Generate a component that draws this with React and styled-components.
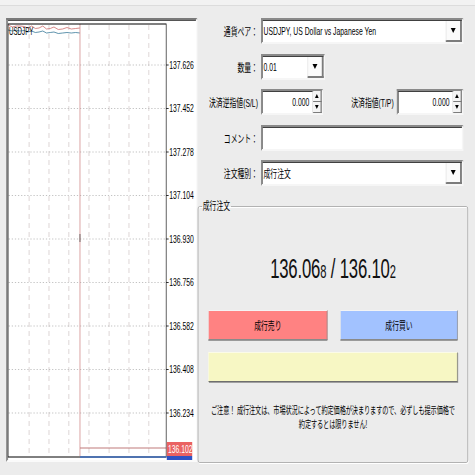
import React from 'react';
import styled, { createGlobalStyle } from 'styled-components';

const Global = createGlobalStyle`
  html, body { margin: 0; padding: 0; background: #ececec; overflow: hidden; }
  body { font-family: "Liberation Sans", "Noto Sans CJK JP", sans-serif; color: #000; }
`;

const Stage = styled.div`
  width: 766px;
  height: 475px;
  transform: scaleX(0.62);
  transform-origin: 0 0;
  background: #ececec;
  display: flex;
  flex-direction: column;
`;

const TopStrip = styled.div`
  height: 5px;
  background: #f2f2f2;
  border-bottom: 1px solid #dcdcdc;
`;

const Body = styled.div`
  display: flex;
  padding: 12px 0 0 10px;
  gap: 1px;
`;

const ChartPanel = styled.div`
  box-sizing: border-box;
  width: 308px;
  height: 444px;
  background: #fff;
  border: 2px solid;
  border-color: #7a7a7a #fafafa #fafafa #7a7a7a;
  box-shadow: inset 1px 1px 0 #555;
`;

const RightPane = styled.div`
  width: 436px;
  display: flex;
  flex-direction: column;
`;

const Form = styled.div`
  display: flex;
  flex-direction: column;
  gap: 9.5px;
`;

const Row = styled.div`
  display: flex;
  align-items: center;
  height: 26px;
`;

const Label = styled.div`
  width: ${p => p.$w || 97}px;
  text-align: right;
  font-size: 11px;
  white-space: nowrap;
  margin-right: ${p => p.$gap ?? 5}px;
  margin-left: ${p => p.$ml || 0}px;
`;

const Field = styled.div`
  box-sizing: border-box;
  height: 26px;
  width: ${p => p.$w}px;
  background: #fff;
  border: 2px solid;
  border-color: #8a8a8a #f6f6f6 #f6f6f6 #8a8a8a;
  box-shadow: inset 1px 1px 0 #404040;
  display: flex;
  align-items: stretch;
  font-size: 11px;
`;

const Value = styled.div`
  flex: 1;
  display: flex;
  align-items: center;
  justify-content: ${p => (p.$right ? 'flex-end' : 'flex-start')};
  padding: ${p => (p.$right ? '0 5px 0 0' : '0 0 0 2px')};
  white-space: nowrap;
`;

const DropBtn = styled.div`
  width: 22px;
  margin: 1px 0 0 0;
  background: #fbfbfb;
  border-right: 3px solid #7c7c7c;
  border-bottom: 2px solid #7c7c7c;
  border-left: 1px solid #e0e0e0;
  display: flex;
  align-items: center;
  justify-content: center;
  &::after {
    content: '';
    border-left: 4px solid transparent;
    border-right: 4px solid transparent;
    border-top: 5px solid #000;
  }
`;

const Spin = styled.div`
  width: 14px;
  display: flex;
  flex-direction: column;
  border-left: 1px solid #d0d0d0;
`;

const SpinHalf = styled.div`
  flex: 1;
  background: #f4f4f4;
  border-right: 2px solid #7c7c7c;
  border-bottom: 1px solid #7c7c7c;
  display: flex;
  align-items: center;
  justify-content: center;
  &::after {
    content: '';
    border-left: 3px solid transparent;
    border-right: 3px solid transparent;
    ${p => (p.$up ? 'border-bottom: 4px solid #000;' : 'border-top: 4px solid #000;')}
  }
`;

const Group = styled.fieldset`
  box-sizing: border-box;
  margin: 14px 0 0 0;
  padding: 0 16px;
  height: 263px;
  border: 1px solid #a4a4a4;
  border-radius: 3px;
  box-shadow: inset 1px 1px 0 #fff, 1px 1px 0 #fff;
`;

const Legend = styled.legend`
  font-size: 11px;
  padding: 0 1px;
  margin-left: -10px;
  line-height: 13px;
`;

const Price = styled.div`
  margin-top: 40px;
  text-align: center;
  font-size: 27px;
  line-height: 32px;
  color: #111;
  letter-spacing: -0.3px;
`;

const Small = styled.span`
  font-size: 18px;
`;

const ButtonRow = styled.div`
  margin-top: 22px;
  display: flex;
  justify-content: space-between;
`;

const TradeBtn = styled.div`
  box-sizing: border-box;
  width: ${p => p.$w}px;
  height: 30px;
  background: ${p => p.$bg};
  border: 1px solid;
  border-color: #f4f4f4 #8a8a8a #8a8a8a #f4f4f4;
  box-shadow: 0 1px 0 #9a9a9a;
  display: flex;
  align-items: center;
  justify-content: center;
  font-size: 11px;
`;

const YellowBar = styled.div`
  box-sizing: border-box;
  margin-top: 12px;
  height: 30px;
  background: #f7f7c4;
  border: 1px solid;
  border-color: #fbfbe8 #6e6e6e #6e6e6e #fbfbe8;
  box-shadow: 1px 1px 0 #a0a0a0;
`;

const Notice = styled.div`
  margin-top: 22px;
  text-align: center;
  font-size: 10px;
  line-height: 13.5px;
  white-space: nowrap;
  letter-spacing: -0.2px;
`;

const gridY = [45, 88.5, 132, 175.5, 219, 262.5, 306, 349.5, 393];
const labels = ['137.626', '137.452', '137.278', '137.104', '136.930', '136.756', '136.582', '136.408', '136.234'];
const gridX = [35, 67, 99, 131.5, 164, 196, 228];

const blue = [[1,10],[8,11],[14,10],[20,11],[27,10.5],[33,12],[39,11],[45,12.5],[51,12],[57,11],[63,13],[69,12.5],[75,12],[82,13.5],[89,13],[96,12.5],[103,13],[110,12.5],[117,13]];
const red = blue.map(([x, y], i) => [x, y - 4 - (i % 3 === 0 ? 1 : 0)]);
const pts = a => a.map(p => p.join(',')).join(' ');

function Chart() {
  return (
    <svg width="304" height="440" viewBox="0 0 304 440">
      {gridX.map(x => (
        <line key={x} x1={x} y1={5} x2={x} y2={436} stroke="#d6cccc" strokeWidth="1" strokeDasharray="5 4" />
      ))}
      {gridY.map(y => (
        <line key={y} x1={2} y1={y} x2={256} y2={y} stroke="#b4b4b4" strokeWidth="1" strokeDasharray="2 3" />
      ))}
      <polyline points={pts(red)} fill="none" stroke="#d07070" strokeWidth="1" />
      <polyline points={pts(blue)} fill="none" stroke="#3a7a9a" strokeWidth="1" />
      <text x="2.5" y="15" fontSize="10" fontFamily="Liberation Sans" fill="#000">USDJPY</text>
      <line x1={117} y1={4} x2={117} y2={436} stroke="#d49090" strokeWidth="1" />
      <line x1={117} y1={214} x2={117} y2={222} stroke="#555" strokeWidth="1" />
      <line x1={117} y1={428} x2={256} y2={428} stroke="#c07a7a" strokeWidth="1.2" />
      <rect x="1" y="4" width="255" height="433" fill="none" stroke="#000" strokeWidth="1" />
      <line x1={117} y1={437} x2={256} y2={437} stroke="#3f6fc0" strokeWidth="1.5" />
      {gridY.map((y, i) => (
        <g key={y}>
          <line x1={256} y1={y} x2={260} y2={y} stroke="#000" strokeWidth="1" />
          <text x="261" y={y + 4} fontSize="11" fontFamily="Liberation Sans" fill="#000">{labels[i]}</text>
        </g>
      ))}
      <rect x="257" y="422" width="41" height="14" fill="#ea6262" />
      <text x="259" y="433" fontSize="11" fontFamily="Liberation Sans" fill="#fff">136.102</text>
      <rect x="257" y="436" width="41" height="5" fill="#2f52c4" />
    </svg>
  );
}

function Select({ w, value }) {
  return (
    <Field $w={w}>
      <Value>{value}</Value>
      <DropBtn />
    </Field>
  );
}

function Spinner({ w, value }) {
  return (
    <Field $w={w}>
      <Value $right>{value}</Value>
      <Spin>
        <SpinHalf $up />
        <SpinHalf />
      </Spin>
    </Field>
  );
}

export default function App() {
  return (
    <>
      <Global />
      <Stage>
        <TopStrip />
        <Body>
          <ChartPanel>
            <Chart />
          </ChartPanel>
          <RightPane>
            <Form>
              <Row>
                <Label>通貨ペア：</Label>
                <Select w={326} value="USDJPY, US Dollar vs Japanese Yen" />
              </Row>
              <Row>
                <Label>数量：</Label>
                <Select w={103} value="0.01" />
              </Row>
              <Row>
                <Label>決済逆指値(S/L)</Label>
                <Spinner w={100} value="0.000" />
                <Label $w={70} $ml={44} $gap={5}>決済指値(T/P)</Label>
                <Spinner w={107} value="0.000" />
              </Row>
              <Row>
                <Label>コメント：</Label>
                <Field $w={326} />
              </Row>
              <Row>
                <Label>注文種別：</Label>
                <Select w={326} value="成行注文" />
              </Row>
            </Form>
            <Group>
              <Legend>成行注文</Legend>
              <Price>
                136.06<Small>8</Small> / 136.10<Small>2</Small>
              </Price>
              <ButtonRow>
                <TradeBtn $w={192} $bg="#ff8282">成行売り</TradeBtn>
                <TradeBtn $w={189} $bg="#a2c2ff">成行買い</TradeBtn>
              </ButtonRow>
              <YellowBar />
              <Notice>
                ご注意！ 成行注文は、市場状況によって約定価格が決まりますので、必ずしも提示価格で
                <br />
                約定するとは限りません!
              </Notice>
            </Group>
          </RightPane>
        </Body>
      </Stage>
    </>
  );
}
